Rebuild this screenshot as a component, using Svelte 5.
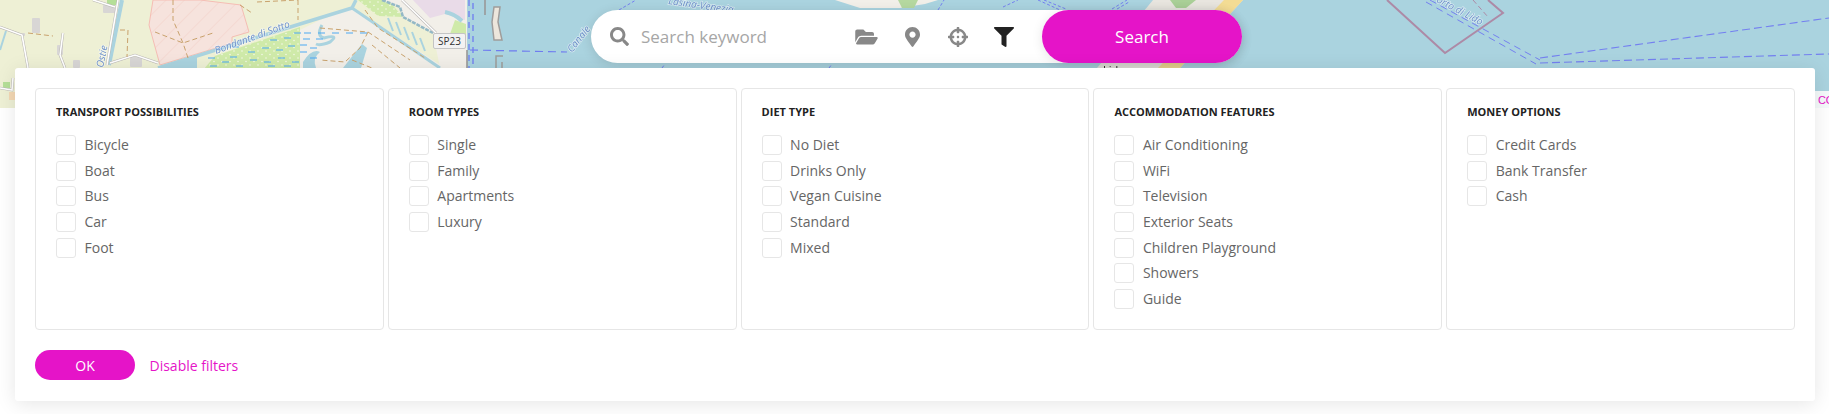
<script>
  const groups = [
    { title: 'Transport possibilities', items: ['Bicycle', 'Boat', 'Bus', 'Car', 'Foot'] },
    { title: 'Room types', items: ['Single', 'Family', 'Apartments', 'Luxury'] },
    { title: 'Diet type', items: ['No Diet', 'Drinks Only', 'Vegan Cuisine', 'Standard', 'Mixed'] },
    { title: 'Accommodation features', items: ['Air Conditioning', 'WiFi', 'Television', 'Exterior Seats', 'Children Playground', 'Showers', 'Guide'] },
    { title: 'Money options', items: ['Credit Cards', 'Bank Transfer', 'Cash'] }
  ];

  const roads = [
    '0,27 22,35 28,68', '118,0 107,65', '63,33 60,55 65,68', '110,63 135,55 158,63', '93,0 115,7',
    '13,78 12,90 0,88', '402,0 436,33'
  ];
  const tracks = [
    '28,33 53,36', '173,0 173,20 183,43 188,58', '155,32 183,43 213,33', '120,30 128,30 127,57',
    '240,5 252,13', '257,2 298,0', '298,0 298,20', '368,32 360,48 345,62 320,60', '320,28 368,32 410,60',
    '372,45 400,68', '352,60 372,68', '365,10 378,28 400,42 425,58'
  ];
  const buildings = [
    [32, 18, 8, 15], [57, 45, 6, 10], [73, 60, 7, 8], [130, 57, 12, 10], [103, 5, 12, 8], [22, 33, 3, 3]
  ];
  const marsh = [
    [208, 58], [222, 62], [236, 66], [250, 60], [264, 62], [278, 58], [292, 62], [216, 49], [232, 47], [248, 52], [262, 48], [276, 50],
    [288, 46], [270, 40], [284, 38], [294, 33], [304, 33], [318, 33], [332, 33], [346, 33], [360, 33], [303, 39], [316, 39],
    [300, 45], [310, 48], [310, 58], [230, 57], [268, 66], [284, 66], [300, 52], [210, 66]
  ];
  const stripes = [
    [388, 18], [396, 22], [404, 27], [412, 32], [420, 38]
  ];
  const ferries = [
    '619,10 636,0', '1003,7 1018,0', '1038,0 1060,10', '1044,0 1066,9', '1112,9 1127,0', '1117,9 1129,2', '938,10 944,0', '662,68 665,64', '829,68 832,64'
  ];
</script>

<div class="page">
  <div class="map">
    <svg width="1829" height="108" viewBox="0 0 1829 108" aria-hidden="true">
      <defs>
        <pattern id="hatch" width="13" height="13" patternUnits="userSpaceOnUse" patternTransform="rotate(-45)">
          <rect width="13" height="13" fill="#f6e3dd" />
          <line x1="0" y1="0" x2="13" y2="0" stroke="#f2cfc8" stroke-width="1" />
        </pattern>
        <pattern id="wet" width="8" height="7" patternUnits="userSpaceOnUse">
          <rect width="8" height="7" fill="#cfeaa9" />
          <circle cx="2" cy="2" r="0.8" fill="#f4f9e8" />
          <circle cx="6" cy="5.5" r="0.8" fill="#f4f9e8" />
        </pattern>
      </defs>
      <rect width="1829" height="108" fill="#aad3df" />

      <rect width="467" height="108" fill="#eef0d5" />
      <polygon points="203,68 300,30 320,20 353,8 445,68" fill="#f2efe9" />
      <polygon points="203,70 215,56 300,27 300,70" fill="url(#wet)" />
      <polygon points="356,8 403,17 433,33 440,62" fill="#eef0d5" />
      <polygon points="358,0 388,0 403,17 378,16" fill="url(#wet)" />
      <polygon points="382,0 467,0 467,68 440,68 433,33 403,17 400,7" fill="#f2efe9" />
      <polygon points="413,0 465,0 465,20 445,14 430,18" fill="#e9dbe8" />
      <polygon points="450,34 455,20 466,24 466,35" fill="#cfeaa9" />
      <path d="M445 12 Q455 14 462 21" stroke="#aad3df" stroke-width="4" fill="none" />
      <polygon points="343,68 362,44 367,48 361,68" fill="#aad3df" />
      <path d="M303 62 Q312 48 320 52 Q312 58 316 68 L303 68 Z" fill="#aad3df" />
      <path d="M322 25 Q316 36 324 38 Q340 34 330 42 Q320 46 316 44" stroke="#aad3df" stroke-width="3" fill="none" />

      <polygon points="153,0 149,25 160,65 213,49 232,43 232,37 249,32 241,5 200,0" fill="url(#hatch)" stroke="#f5bdb4" stroke-width="1" />

      <polyline points="158,68 300,24 352,8 356,0" fill="none" stroke="#aad3df" stroke-width="3.5" />
      <polyline points="352,8 440,68" fill="none" stroke="#aad3df" stroke-width="3" />
      <polyline points="122,0 109,65" fill="none" stroke="#aad3df" stroke-width="4" />
      <polyline points="6,31 0,50" fill="none" stroke="#aad3df" stroke-width="2" />
      <polyline points="382,0 400,7 403,17 433,33" fill="none" stroke="#93b8c6" stroke-width="2.5" stroke-dasharray="4 1" />
      <polygon points="160,68 197,57 197,68" fill="#aad3df" />
      <rect x="107" y="0" width="11" height="5" fill="#b5df98" />
      <rect x="3" y="82" width="7" height="6" fill="#b5df98" />
      <rect x="9" y="92" width="6" height="8" fill="#f4d8b4" />

      {#each buildings as b}
        <rect x={b[0]} y={b[1]} width={b[2]} height={b[3]} rx="1" fill="#d8d6d5" />
      {/each}
      {#each roads as r}
        <polyline points={r} fill="none" stroke="#b9b6b4" stroke-width="2.6" />
        <polyline points={r} fill="none" stroke="#fff" stroke-width="1.6" />
      {/each}
      {#each tracks as t}
        <polyline points={t} fill="none" stroke="#c9a26d" stroke-width="1" stroke-dasharray="5 3" />
      {/each}
      {#each marsh as m}
        <line x1={m[0]} y1={m[1]} x2={m[0] + 7} y2={m[1]} stroke="#4da9f2" stroke-width="1" />
      {/each}
      {#each stripes as s}
        <line x1={s[0]} y1={s[1]} x2={s[0] + 5} y2={s[1] + 13} stroke="#aad3df" stroke-width="2" />
      {/each}
      {#each ferries as f}
        <polyline points={f} fill="none" stroke="#7480f0" stroke-width="1" stroke-dasharray="3 2" />
      {/each}

      <text class="lab" transform="translate(216 54) rotate(-20)">Bondante di Sotto</text>
      <text class="lab" transform="translate(103 68) rotate(-78)">Ostie</text>

      <path d="M467 50 V68" stroke="#9a9896" stroke-width="1.6" />
      <line x1="469" y1="0" x2="469" y2="68" stroke="#6f7cf0" stroke-width="1.3" stroke-dasharray="6 5" />
      <line x1="473" y1="3" x2="473" y2="68" stroke="#6f7cf0" stroke-width="1.3" stroke-dasharray="6 5" />
      <polyline points="470,50 567,52" fill="none" stroke="#6f7cf0" stroke-width="1.2" stroke-dasharray="8 5" />
      <path d="M485 0 V15" stroke="#999" stroke-width="1.6" />
      <path d="M494 7 H500 L498 22 L502 40 H494 L492 22 Z" fill="#ece6dc" stroke="#9f9d9b" stroke-width="1.5" />
      <path d="M503 56 H496 V68 M502 62 V68" fill="none" stroke="#9f9d9b" stroke-width="1.5" />
      <text class="lab" transform="translate(572 53) rotate(-52)">Canale</text>

      <text class="lab" transform="translate(668 4) rotate(8)">Lasina-Venezia</text>

      <polygon points="835,0 938,0 925,4 900,8 860,8" fill="#f2efe9" />
      <polygon points="898,0 918,0 914,8 902,8" fill="#b5d8a0" />
      <polygon points="1153,0 1243,0 1180,68 1097,68" fill="#e8e5df" />
      <polygon points="1224,0 1243,0 1180,68 1158,68" fill="#f3dc94" />
      <polygon points="1170,0 1196,0 1186,8 1176,8" fill="#a9cf97" />
      <text class="lido" x="1103" y="74">Lido</text>

      <polyline points="1387,0 1445,53 1503,13 1488,0" fill="none" stroke="#ad8aa6" stroke-width="2" />
      <line x1="1473" y1="0" x2="1488" y2="17" stroke="#ad8aa6" stroke-width="1" stroke-dasharray="5 3" />
      <polyline points="1430,0 1540,60" fill="none" stroke="#7480f0" stroke-width="1" stroke-dasharray="7 5" />
      <polyline points="1426,2 1536,64" fill="none" stroke="#7480f0" stroke-width="1" stroke-dasharray="7 5" />
      <text class="lab" transform="translate(1431 -1) rotate(28)">Porto di Lido</text>
      <line x1="1540" y1="58" x2="1829" y2="18" stroke="#7480f0" stroke-width="1.1" stroke-dasharray="8 4" />
      <line x1="1540" y1="63" x2="1829" y2="54" stroke="#7480f0" stroke-width="1.1" stroke-dasharray="8 4" />
    </svg>
    <span class="shield">SP23</span>
    <a class="attr" href="#top">CO</a>
  </div>

  <div class="search-bar">
    <svg class="glass" viewBox="0 0 512 512" aria-hidden="true"><path d="M505 442.7L405.3 343c-4.5-4.5-10.6-7-17-7H372c27.6-35.3 44-79.7 44-128C416 93.1 322.9 0 208 0S0 93.1 0 208s93.1 208 208 208c48.3 0 92.7-16.4 128-44v16.3c0 6.4 2.5 12.5 7 17l99.7 99.7c9.4 9.4 24.6 9.4 33.9 0l28.3-28.3c9.4-9.4 9.4-24.6.1-34zM208 336c-70.7 0-128-57.2-128-128 0-70.7 57.2-128 128-128 70.7 0 128 57.2 128 128 0 70.7-57.2 128-128 128z" /></svg>
    <span class="placeholder">Search keyword</span>
    <div class="tools">
      <span class="tool"><svg class="folder" viewBox="0 0 576 512" aria-hidden="true"><path d="M572.694 292.093L500.27 416.248A63.997 63.997 0 0 1 444.989 448H45.025c-18.523 0-30.064-20.093-20.731-36.093l72.424-124.155A64 64 0 0 1 152 256h399.964c18.523 0 30.064 20.093 20.73 36.093zM152 224h328v-48c0-26.51-21.49-48-48-48H272l-64-64H48C21.49 64 0 85.49 0 112v278.046l69.077-118.418C86.214 242.25 117.989 224 152 224z" /></svg></span>
      <span class="tool"><svg class="pin" viewBox="0 0 384 512" aria-hidden="true"><path d="M172.268 501.67C26.97 291.031 0 268.413 0 192 0 85.961 85.961 0 192 0s192 85.961 192 192c0 76.413-26.97 99.031-172.268 309.67-9.535 13.774-29.93 13.773-39.464 0zM192 272c44.183 0 80-35.817 80-80s-35.817-80-80-80-80 35.817-80 80 35.817 80 80 80z" /></svg></span>
      <span class="tool"><svg class="cross" viewBox="0 0 512 512" aria-hidden="true"><path d="M500 224h-30.364C455.724 130.325 381.675 56.276 288 42.364V12c0-6.627-5.373-12-12-12h-40c-6.627 0-12 5.373-12 12v30.364C130.325 56.276 56.276 130.325 42.364 224H12c-6.627 0-12 5.373-12 12v40c0 6.627 5.373 12 12 12h30.364C56.276 381.675 130.325 455.724 224 469.636V500c0 6.627 5.373 12 12 12h40c6.627 0 12-5.373 12-12v-30.364C381.675 455.724 455.724 381.675 469.636 288H500c6.627 0 12-5.373 12-12v-40c0-6.627-5.373-12-12-12zM288 404.634V364c0-6.627-5.373-12-12-12h-40c-6.627 0-12 5.373-12 12v40.634C165.826 392.232 119.783 346.243 107.366 288H148c6.627 0 12-5.373 12-12v-40c0-6.627-5.373-12-12-12h-40.634C119.768 165.826 165.757 119.783 224 107.366V148c0 6.627 5.373 12 12 12h40c6.627 0 12-5.373 12-12v-40.634C346.174 119.768 392.217 165.757 404.634 224H364c-6.627 0-12 5.373-12 12v40c0 6.627 5.373 12 12 12h40.634C392.232 346.174 346.243 392.217 288 404.634zM288 256c0 17.673-14.327 32-32 32s-32-14.327-32-32c0-17.673 14.327-32 32-32s32 14.327 32 32z" /></svg></span>
      <span class="tool"><svg class="funnel" viewBox="0 0 512 512" aria-hidden="true"><path d="M487.976 0H24.028C2.71 0-8.047 25.866 7.058 40.971L192 225.941V432c0 7.831 3.821 15.17 10.237 19.662l80 55.98C298.02 518.69 320 507.493 320 487.98V225.941l184.947-184.97C520.021 25.896 509.338 0 487.976 0z" /></svg></span>
    </div>
    <button class="search-btn" type="button">Search</button>
  </div>

  <section class="panel">
    <div class="columns">
      {#each groups as g}
        <div class="box">
          <h6>{g.title}</h6>
          <ul>
            {#each g.items as item}
              <li><span class="check"></span><span>{item}</span></li>
            {/each}
          </ul>
        </div>
      {/each}
    </div>
    <div class="actions">
      <button class="ok" type="button">OK</button>
      <a class="disable" href="#top">Disable filters</a>
    </div>
  </section>
</div>

<style>
  :global(body) {
    margin: 0;
    background: #fff;
    overflow: hidden;
    font-family: "Open Sans", sans-serif;
  }
  .page {
    position: relative;
    width: 1829px;
    height: 414px;
    overflow: hidden;
  }
  .map {
    position: relative;
    height: 108px;
    overflow: hidden;
  }
  .map svg {
    display: block;
    filter: blur(0.35px);
  }
  .lab {
    font: italic 10px "Open Sans", sans-serif;
    fill: #6b8fc9;
    stroke: rgba(255, 255, 255, 0.55);
    stroke-width: 1.5px;
    paint-order: stroke;
  }
  .lido {
    font: 11px "Open Sans", sans-serif;
    fill: #222;
  }
  .shield {
    position: absolute;
    left: 433px;
    top: 33px;
    width: 33px;
    height: 16px;
    box-sizing: border-box;
    border: 1px solid #c4c4c4;
    border-radius: 2px;
    background: #f2f2f2;
    color: #333;
    font-size: 10px;
    line-height: 14px;
    text-align: center;
  }
  .attr {
    position: absolute;
    left: 1815px;
    right: 0;
    top: 91px;
    height: 17px;
    overflow: hidden;
    background: rgba(255, 255, 255, 0.88);
    color: #e514c8;
    font: 11px/18px "Liberation Sans", sans-serif;
    letter-spacing: -0.3px;
    text-decoration: none;
    padding-left: 3px;
    white-space: nowrap;
  }
  .search-bar {
    position: absolute;
    left: 591px;
    top: 10px;
    width: 651px;
    height: 53px;
    display: flex;
    align-items: center;
    background: #fff;
    border-radius: 27px;
    box-shadow: 0 2px 12px rgba(0, 0, 0, 0.12);
    padding-left: 19px;
    box-sizing: border-box;
  }
  .glass {
    width: 19px;
    height: 19px;
    fill: #888;
    flex: none;
  }
  .placeholder {
    flex: 1;
    margin-left: 12px;
    font-size: 17px;
    color: #a6a6a6;
  }
  .tools {
    display: flex;
    margin-right: 15px;
  }
  .tool {
    width: 46px;
    height: 24px;
    display: flex;
    align-items: center;
    justify-content: center;
  }
  .tool svg {
    fill: #888;
    display: block;
  }
  .folder { width: 23px; height: 20px; }
  .pin { width: 15px; height: 20px; }
  .cross { width: 20px; height: 20px; }
  .tool .funnel { width: 20px; height: 20px; fill: #222; }
  .search-btn {
    width: 200px;
    height: 53px;
    flex: none;
    border: 0;
    border-radius: 27px;
    background: #e514c8;
    color: #fff;
    font: 500 17px "Open Sans", sans-serif;
    box-shadow: 0 2px 12px rgba(0, 0, 0, 0.1);
  }
  .panel {
    position: absolute;
    left: 15px;
    top: 68px;
    width: 1800px;
    height: 333px;
    box-sizing: border-box;
    padding: 20px;
    background: #fff;
    border-radius: 3px;
    box-shadow: 0 3px 20px rgba(0, 0, 0, 0.1);
  }
  .columns {
    display: grid;
    grid-template-columns: repeat(5, 1fr);
    gap: 4px;
  }
  .box {
    height: 242px;
    box-sizing: border-box;
    border: 1px solid #e6e6e6;
    border-radius: 4px;
    padding: 16px 20px 0;
  }
  h6 {
    margin: 0 0 16px;
    font-size: 11px;
    line-height: 14px;
    font-weight: 700;
    text-transform: uppercase;
    color: #222;
  }
  ul {
    margin: 0;
    padding: 0;
    list-style: none;
  }
  li {
    display: flex;
    height: 25.67px;
    font-size: 14px;
    line-height: 20px;
    color: #666;
  }
  .check {
    flex: none;
    width: 20px;
    height: 20px;
    box-sizing: border-box;
    border: 1px solid #e6e6e6;
    border-radius: 3px;
    margin-right: 8.5px;
  }
  .actions {
    display: flex;
    align-items: center;
    margin-top: 20px;
  }
  .ok {
    width: 100px;
    height: 30px;
    border: 0;
    border-radius: 15px;
    background: #e514c8;
    color: #fff;
    font: 500 14px "Open Sans", sans-serif;
  }
  .disable {
    margin-left: 14.5px;
    color: #e514c8;
    font-size: 14px;
    text-decoration: none;
  }
</style>
